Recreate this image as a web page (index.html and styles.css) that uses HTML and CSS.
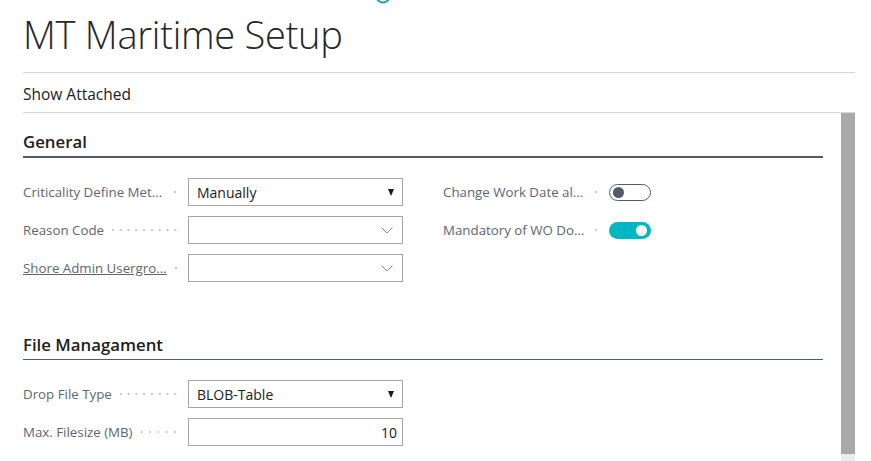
FILE: index.html
```html
<!DOCTYPE html>
<html lang="en">
<head>
<meta charset="utf-8">
<title>MT Maritime Setup</title>
<link rel="stylesheet" href="styles.css">
</head>
<body>
<div class="page">
  <svg class="top-icon" width="20" height="6" viewBox="0 0 20 6" aria-hidden="true">
    <circle cx="10" cy="-4" r="6.5" fill="none" stroke="#2b9aa5" stroke-width="2"/>
  </svg>
  <header class="title-bar">
    <h1 class="title">MT Maritime Setup</h1>
  </header>
  <nav class="action-bar">
    <span class="action">Show Attached</span>
  </nav>
  <div class="scroll">
    <div class="content">
      <section class="group">
        <h2 class="group-title focused">General</h2>
        <div class="fields">
          <div class="col">
            <div class="field">
              <div class="caption"><span class="caption-text">Criticality Define Met...</span><span class="leader"></span></div>
              <div class="box select"><span class="value">Manually</span><span class="tri"></span></div>
            </div>
            <div class="field">
              <div class="caption"><span class="caption-text">Reason Code</span><span class="leader"></span></div>
              <div class="box lookup"><span class="value"></span>
                <svg class="chev" width="12" height="7" viewBox="0 0 12 7"><polyline points="0.5,0.5 6,6 11.5,0.5" fill="none" stroke="#8a8a8a" stroke-width="1"/></svg>
              </div>
            </div>
            <div class="field">
              <div class="caption"><span class="caption-text link">Shore Admin Usergro...</span><span class="leader"></span></div>
              <div class="box lookup"><span class="value"></span>
                <svg class="chev" width="12" height="7" viewBox="0 0 12 7"><polyline points="0.5,0.5 6,6 11.5,0.5" fill="none" stroke="#8a8a8a" stroke-width="1"/></svg>
              </div>
            </div>
          </div>
          <div class="col right">
            <div class="field">
              <div class="caption"><span class="caption-text">Change Work Date al...</span><span class="leader"></span></div>
              <div class="toggle-cell"><span class="toggle off"><span class="knob"></span></span></div>
            </div>
            <div class="field">
              <div class="caption"><span class="caption-text">Mandatory of WO Do...</span><span class="leader"></span></div>
              <div class="toggle-cell"><span class="toggle on"><span class="knob"></span></span></div>
            </div>
          </div>
        </div>
      </section>
      <section class="group second">
        <h2 class="group-title">File Managament</h2>
        <div class="fields">
          <div class="col">
            <div class="field">
              <div class="caption"><span class="caption-text">Drop File Type</span><span class="leader"></span></div>
              <div class="box select"><span class="value">BLOB-Table</span><span class="tri"></span></div>
            </div>
            <div class="field">
              <div class="caption"><span class="caption-text">Max. Filesize (MB)</span><span class="leader"></span></div>
              <div class="box number"><span class="value">10</span></div>
            </div>
          </div>
        </div>
      </section>
    </div>
    <div class="scrollbar">
      <div class="thumb"></div>
      <div class="track"></div>
    </div>
  </div>
</div>
</body>
</html>
```

FILE: styles.css
```css
* { box-sizing: border-box; }

html, body {
  margin: 0;
  padding: 0;
  background: #ffffff;
  overflow: hidden;
}

body {
  font-family: "Open Sans", "Noto Sans", "Liberation Sans", sans-serif;
  color: #212121;
  width: 871px;
  height: 461px;
}

.page {
  position: relative;
  margin-left: 23px;
  width: 832px;
  height: 461px;
  display: flex;
  flex-direction: column;
}

.top-icon {
  position: absolute;
  left: 350px;
  top: 0;
}

.title-bar {
  height: 73px;
  border-bottom: 1px solid #d6d6d6;
}

.title {
  margin: 0;
  padding-top: 9px;
  font-size: 38px;
  line-height: 50px;
  font-weight: 300;
  color: #262626;
  letter-spacing: -0.25px;
}

.action-bar {
  height: 40px;
  border-bottom: 1px solid #d6d6d6;
  display: flex;
  align-items: center;
  padding-top: 3px;
}

.action {
  font-size: 15.5px;
  color: #212121;
}

.scroll {
  flex: 1;
  display: flex;
  min-height: 0;
}

.content {
  flex: 1;
  padding-top: 17px;
  padding-right: 18px;
}

.scrollbar {
  width: 14px;
  display: flex;
  flex-direction: column;
}

.thumb {
  flex: 1;
  background: #a9a9a9;
}

.track {
  height: 7px;
  background: #ececec;
}

.group-title {
  margin: 0;
  font-size: 16.8px;
  line-height: 24px;
  font-weight: 600;
  color: #212121;
  padding-bottom: 2px;
  border-bottom: 1px solid #505c6d;
}

.group-title.focused {
  border-bottom-width: 2px;
}

.fields {
  display: flex;
  gap: 40px;
  padding-top: 20px;
}

.col {
  display: flex;
  flex-direction: column;
  gap: 10px;
}

.field {
  display: grid;
  grid-template-columns: 165px 215px;
  height: 28px;
  align-items: center;
}

.col.right .field {
  grid-template-columns: 166px 42px;
}

.caption {
  display: flex;
  align-items: center;
  padding-right: 9px;
  font-size: 13.3px;
  color: #5e6670;
  white-space: nowrap;
  overflow: hidden;
}

.caption-text.link {
  text-decoration: underline;
}

.leader {
  flex: 1;
  min-width: 8px;
  margin-left: 5px;
  height: 4px;
  background-image: radial-gradient(circle, #c9c9c9 0.9px, transparent 1.2px);
  background-size: 7.6px 4px;
  background-position: right center;
  background-repeat: space no-repeat;
}

.box {
  height: 28px;
  border: 1px solid #a6a6a6;
  display: flex;
  align-items: center;
  padding: 0 8px;
  font-size: 14px;
  color: #212121;
}

.box .value {
  flex: 1;
}

.tri {
  width: 0;
  height: 0;
  border-left: 3.5px solid transparent;
  border-right: 3.5px solid transparent;
  border-top: 7px solid #1a1a1a;
}

.chev {
  margin-right: 1px;
}

.box.number {
  padding-right: 5px;
}

.box.number .value {
  text-align: right;
}

.toggle-cell {
  display: flex;
  align-items: center;
}

.toggle {
  width: 42px;
  height: 17px;
  border-radius: 9px;
  display: flex;
  align-items: center;
  padding: 0 3px;
}

.toggle .knob {
  width: 11px;
  height: 11px;
  border-radius: 50%;
}

.toggle.off {
  border: 1.5px solid #505c6d;
  justify-content: flex-start;
}

.toggle.off .knob {
  background: #505c6d;
}

.toggle.on {
  background: #00b7c3;
  justify-content: flex-end;
  padding: 0 4px;
}

.toggle.on .knob {
  background: #ffffff;
}

.group.second {
  margin-top: 51px;
}
```
